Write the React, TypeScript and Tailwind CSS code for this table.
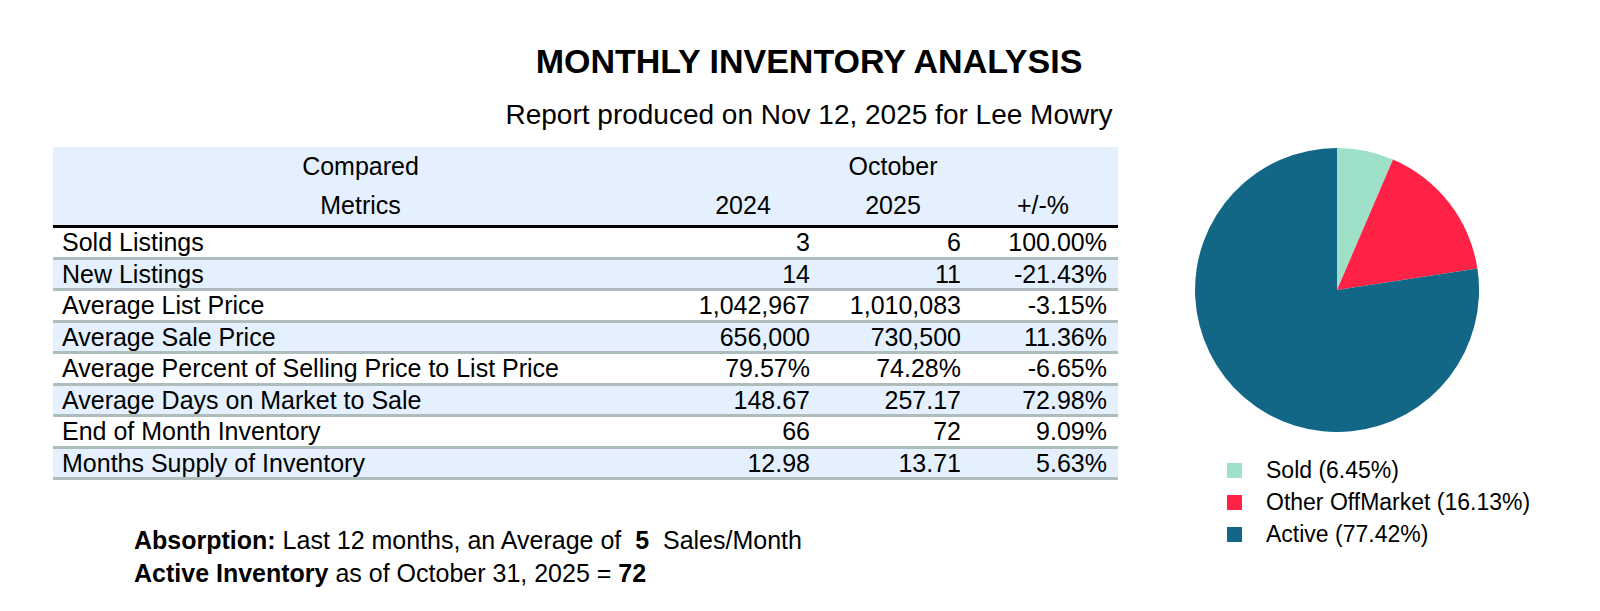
import * as React from "react";

interface MetricRow {
  label: string;
  prior: string;
  current: string;
  change: string;
}

const rows: MetricRow[] = [
  { label: "Sold Listings", prior: "3", current: "6", change: "100.00%" },
  { label: "New Listings", prior: "14", current: "11", change: "-21.43%" },
  { label: "Average List Price", prior: "1,042,967", current: "1,010,083", change: "-3.15%" },
  { label: "Average Sale Price", prior: "656,000", current: "730,500", change: "11.36%" },
  { label: "Average Percent of Selling Price to List Price", prior: "79.57%", current: "74.28%", change: "-6.65%" },
  { label: "Average Days on Market to Sale", prior: "148.67", current: "257.17", change: "72.98%" },
  { label: "End of Month Inventory", prior: "66", current: "72", change: "9.09%" },
  { label: "Months Supply of Inventory", prior: "12.98", current: "13.71", change: "5.63%" },
];

const legend = [
  { label: "Sold (6.45%)", color: "bg-[#9ee1c8]" },
  { label: "Other OffMarket (16.13%)", color: "bg-[#ff2146]" },
  { label: "Active (77.42%)", color: "bg-[#126686]" },
];

function InventoryPie() {
  // slices start at 12 o'clock, clockwise: sold, other off market, active
  return (
    <svg width="284" height="284" viewBox="0 0 284 284">
      <path d="M142,142 L142,0 A142,142 0 0 1 198,11.5 Z" fill="#9ee1c8" />
      <path d="M142,142 L198,11.5 A142,142 0 0 1 282.4,120.5 Z" fill="#ff2146" />
      <path d="M142,142 L282.4,120.5 A142,142 0 1 1 142,0 Z" fill="#126686" />
    </svg>
  );
}

function MetricsTable() {
  return (
    <div className="w-[1065px] text-[25px] text-black">
      <div className="h-[81px] bg-[#e4f0fd] border-b-[3px] border-black">
        <div className="grid grid-cols-[615px_450px] h-[39px] leading-[39px] text-center">
          <div>Compared</div>
          <div>October</div>
        </div>
        <div className="grid grid-cols-[615px_150px_150px_150px] h-[39px] leading-[39px] text-center">
          <div>Metrics</div>
          <div>2024</div>
          <div>2025</div>
          <div>+/-%</div>
        </div>
      </div>
      {rows.map((row, i) => (
        <div
          key={row.label}
          className={`grid grid-cols-[615px_150px_150px_150px] h-[31.5px] leading-[28.5px] border-b-[3px] border-[#adbdbd] ${
            i % 2 === 1 ? "bg-[#e4f0fd]" : "bg-white"
          }`}
        >
          <div className="pl-[9px] whitespace-nowrap">{row.label}</div>
          <div className="pr-[8px] text-right">{row.prior}</div>
          <div className="pr-[7px] text-right">{row.current}</div>
          <div className="pr-[11px] text-right">{row.change}</div>
        </div>
      ))}
    </div>
  );
}

export default function App() {
  return (
    <div className="w-[1600px] h-[611px] bg-white text-black font-['Liberation_Sans',Arial,sans-serif] overflow-hidden">
      <header className="pt-[44px] pl-[18px] text-center">
        <h1 className="text-[34px] leading-none font-bold">MONTHLY INVENTORY ANALYSIS</h1>
        <p className="mt-[23px] text-[28px] leading-none">Report produced on Nov 12, 2025 for Lee Mowry</p>
      </header>

      <div className="flex items-start pt-[18px]">
        <section className="pl-[53px]">
          <MetricsTable />
          <div className="mt-[44px] ml-[81px] text-[25px] leading-[32.6px]">
            <p>
              <span className="font-bold">Absorption:</span> Last 12 months, an Average of{"\u00a0 "}
              <span className="font-bold">5</span>
              {"\u00a0 "}Sales/Month
            </p>
            <p>
              <span className="font-bold">Active Inventory</span> as of October 31, 2025 ={" "}
              <span className="font-bold">72</span>
            </p>
          </div>
        </section>

        <aside className="ml-[77px] pt-px">
          <InventoryPie />
          <ul className="mt-[31px] ml-[32px] space-y-[17px] text-[23px]">
            {legend.map((item) => (
              <li key={item.label} className="flex items-center h-[15px]">
                <span className={`w-[15px] h-[15px] shrink-0 ${item.color}`} />
                <span className="ml-[24px] leading-none whitespace-nowrap">{item.label}</span>
              </li>
            ))}
          </ul>
        </aside>
      </div>
    </div>
  );
}
